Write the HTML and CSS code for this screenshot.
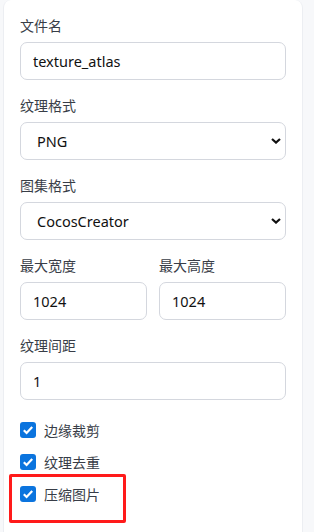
FILE: index.html
```html
<!DOCTYPE html>
<html lang="zh-CN">

<head>
  <meta charset="UTF-8">
  <meta name="viewport" content="width=device-width, initial-scale=1.0">
  <title>图集设置</title>
  <link rel="stylesheet" href="styles.css">
</head>

<body>
  <div class="panel">

    <div class="field">
      <label class="field-label" for="fileName">文件名</label>
      <input class="field-input" id="fileName" type="text" value="texture_atlas">
    </div>

    <div class="field">
      <label class="field-label" for="texFormat">纹理格式</label>
      <select class="field-input field-select" id="texFormat">
        <option>PNG</option>
        <option>JPG</option>
      </select>
    </div>

    <div class="field">
      <label class="field-label" for="atlasFormat">图集格式</label>
      <select class="field-input field-select" id="atlasFormat">
        <option>CocosCreator</option>
        <option>JSON</option>
      </select>
    </div>

    <div class="field field-row">
      <div class="field-col">
        <label class="field-label" for="maxW">最大宽度</label>
        <input class="field-input" id="maxW" type="text" value="1024">
      </div>
      <div class="field-col">
        <label class="field-label" for="maxH">最大高度</label>
        <input class="field-input" id="maxH" type="text" value="1024">
      </div>
    </div>

    <div class="field">
      <label class="field-label" for="padding">纹理间距</label>
      <input class="field-input" id="padding" type="text" value="1">
    </div>

    <div class="checks">
      <label class="check"><input type="checkbox" checked> 边缘裁剪</label>
      <label class="check"><input type="checkbox" checked> 纹理去重</label>
      <!-- 标注框 -->
      <label class="check is-Marked"><input type="checkbox" checked> 压缩图片</label>
    </div>

  </div>
</body>

</html>
```

FILE: styles.css
```css
* {
  box-sizing: border-box;
}

body {
  margin: 0;
  background-color: #f7f8fa;
  font-family: "Noto Sans", "Noto Sans CJK SC", sans-serif;
  color: #383d47;
}

.panel {
  width: 300px;
  height: 100vh;
  margin-left: 3px;
  padding: 16px;
  background-color: #fff;
  border: 1px solid #eceef2;
  border-top: none;
  border-bottom: none;
  border-radius: 8px 8px 0 0;
}

.field {
  margin-bottom: 16px;
}

.field-label {
  display: block;
  font-size: 14px;
  line-height: 20px;
  margin-bottom: 6px;
}

.field-input {
  display: block;
  width: 100%;
  height: 38px;
  padding: 0 12px;
  border: 1px solid #d4d7de;
  border-radius: 7px;
  background-color: #fff;
  font-family: inherit;
  font-size: 14.5px;
  color: #111;
  outline: none;
}

.field-select {
  appearance: none;
  -webkit-appearance: none;
  padding-left: 16px;
  /* 下拉箭头 */
  background-image: url("data:image/svg+xml,%3Csvg xmlns='http://www.w3.org/2000/svg' width='10' height='6' viewBox='0 0 10 6'%3E%3Cpath d='M1 1l4 3.6 4-3.6' fill='none' stroke='%23111' stroke-width='2.2'/%3E%3C/svg%3E");
  background-repeat: no-repeat;
  background-position: right 4px center;
}

.field-row {
  display: flex;
  gap: 12px;
}

.field-col {
  flex: 1;
}

.checks {
  display: flex;
  flex-direction: column;
  gap: 4px;
}

.check {
  position: relative;
  display: flex;
  align-items: center;
  gap: 8px;
  height: 28px;
  font-size: 14px;
}

.check input {
  appearance: none;
  -webkit-appearance: none;
  width: 16px;
  height: 16px;
  margin: 0;
  border-radius: 3px;
  background-color: #0b74de;
  background-image: url("data:image/svg+xml,%3Csvg xmlns='http://www.w3.org/2000/svg' width='16' height='16' viewBox='0 0 16 16'%3E%3Cpath d='M3.8 8.2l2.8 2.8 5.6-6' fill='none' stroke='%23fff' stroke-width='2.2'/%3E%3C/svg%3E");
  background-repeat: no-repeat;
  background-position: center;
}

.check.is-Marked::after {
  content: '';
  position: absolute;
  top: -6px;
  left: -11px;
  width: 111px;
  height: 43px;
  border: 3px solid #ff1a1a;
  border-radius: 2px;
}
```
